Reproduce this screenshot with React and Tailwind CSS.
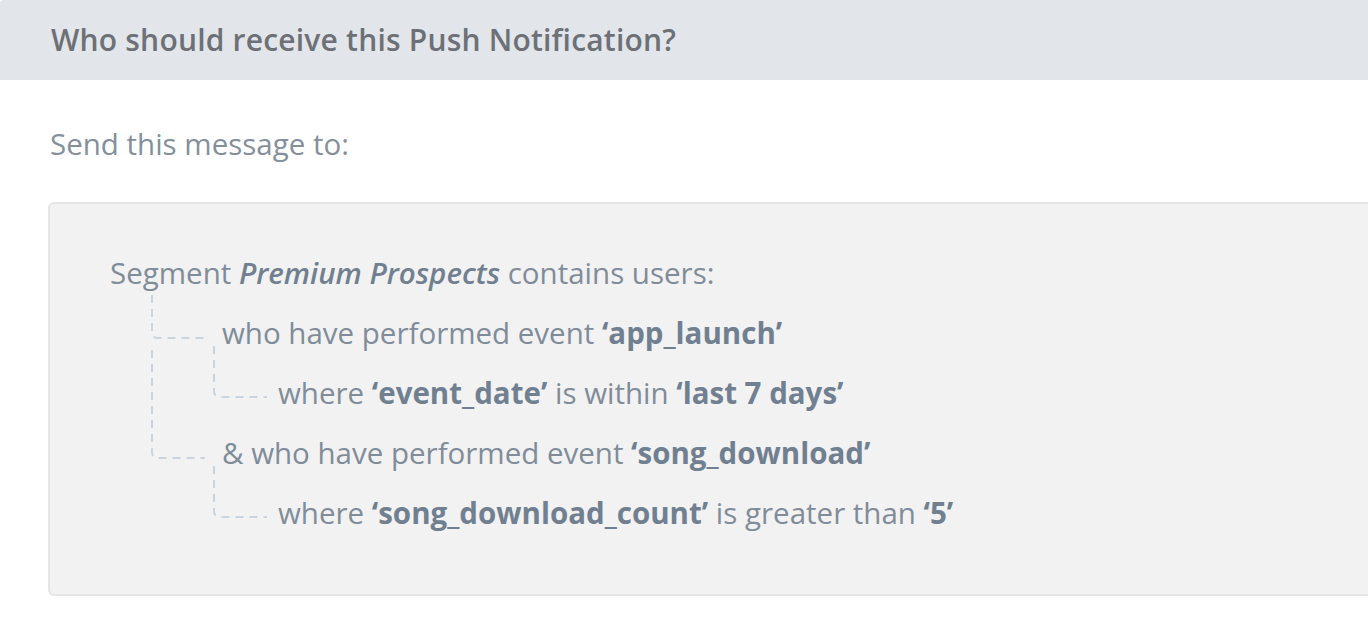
import React from "react";

const B = ({ children }) => (
  <span className="font-bold text-[#718090]">{children}</span>
);

export default function App() {
  const rows = [
    {
      indent: "pl-[60px]",
      content: (
        <>
          Segment <span className="font-semibold italic text-[#718090]">Premium Prospects</span> contains users:
        </>
      ),
    },
    {
      indent: "pl-[172px]",
      content: (
        <>
          who have performed event <B>‘app_launch’</B>
        </>
      ),
    },
    {
      indent: "pl-[228px]",
      content: (
        <>
          where <B>‘event_date’</B> is within <B>‘last 7 days’</B>
        </>
      ),
    },
    {
      indent: "pl-[172px]",
      content: (
        <>
          &amp; who have performed event <B>‘song_download’</B>
        </>
      ),
    },
    {
      indent: "pl-[228px]",
      content: (
        <>
          where <B>‘song_download_count’</B> is greater than <B>‘5’</B>
        </>
      ),
    },
  ];

  return (
    <div
      className="w-[1368px] h-[634px] overflow-hidden bg-white"
      style={{ fontFamily: '"Open Sans", "Noto Sans", sans-serif' }}
    >
      <div className="h-[80px] bg-[#e2e5ea] rounded-tl-[4px] flex items-center pl-[51px]">
        <h2 className="text-[30px] leading-[40px] font-semibold tracking-[0.2px] text-[#6d7177]">
          Who should receive this Push Notification?
        </h2>
      </div>
      <div className="pl-[48px]">
        <p className="mt-[45px] text-[29.5px] leading-[38px] text-[#848f9c] pl-[2px]">
          Send this message to:
        </p>
        <div className="relative mt-[39px] w-[1400px] h-[394px] bg-[#f2f2f2] border-2 border-[#e5e5e5] rounded-[6px] pt-[39px] text-[29.5px] text-[#808c99]">
          <svg
            className="absolute left-0 top-0"
            width="300"
            height="390"
            fill="none"
            stroke="#c9d4df"
            strokeWidth="2"
            strokeDasharray="8 6"
          >
            <path d="M102 91 V128 Q102 134 108 134 H155" />
            <path d="M102 146 V248 Q102 254 108 254 H155" />
            <path d="M164 142 V187 Q164 193 170 193 H217" />
            <path d="M164 262 V307 Q164 313 170 313 H217" />
          </svg>
          {rows.map((r, i) => (
            <div key={i} className={`relative h-[60px] flex items-center ${r.indent}`}>
              <span className="whitespace-nowrap">{r.content}</span>
            </div>
          ))}
        </div>
      </div>
    </div>
  );
}
